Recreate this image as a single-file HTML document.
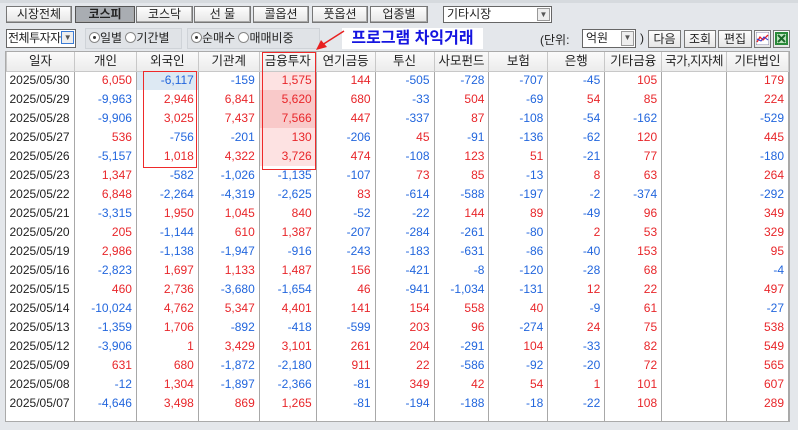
<!DOCTYPE html>
<html><head><meta charset="utf-8"><style>
*{box-sizing:border-box;margin:0;padding:0}
body{width:798px;height:430px;background:#e4e7eb;font-family:"Liberation Sans","Noto Sans CJK KR",sans-serif;font-size:12px;color:#222;position:relative;overflow:hidden}
.a{position:absolute}
.btn{position:absolute;top:6px;height:17px;border:1px solid #777;background:linear-gradient(#fdfdfd,#e6e6e6);text-align:center;line-height:15px;font-size:12px;box-shadow:inset -1px -1px 0 #aaa}
.btn.on{background:#a9adb2;font-weight:bold;border-color:#555}
.sb{position:absolute;height:18px;border:1px solid #777;background:linear-gradient(#fdfdfd,#e6e6e6);text-align:center;line-height:16px;top:30px}
.grp{position:absolute;top:28px;height:21px;border:1px solid #cfd3d8;background:#e0e3e7;line-height:19px;padding-left:3px}
.rad{display:inline-block;width:11px;height:11px;border:1px solid #888;border-radius:50%;background:#fff;vertical-align:-1px;position:relative}
.rad.on::after{content:"";position:absolute;left:3px;top:3px;width:3px;height:3px;border-radius:50%;background:#333}
.combo{position:absolute;border:1px solid #666;background:#fff;height:17px;line-height:15px;padding-left:3px}
.dd{position:absolute;right:1px;top:1px;width:13px;height:13px;border:1px solid #999;background:#eee;font-size:8px;text-align:center;line-height:12px;color:#555}
#tw{position:absolute;left:5px;top:51px;width:785px;height:371px;background:#fff;border:1px solid #aaa;overflow:hidden}
table{border-collapse:collapse;table-layout:fixed;position:absolute;left:0;top:0}
th{height:19px;line-height:17px;background:linear-gradient(#fafafa,#ececec);border:1px solid #c8c8c8;border-top:none;font-weight:normal;font-size:12.5px;color:#222;padding:0}
td{height:19px;line-height:17px;padding-top:0;padding-bottom:0;text-align:right;padding-right:4px;border-left:1px solid #a8a8a8;border-right:1px solid #a8a8a8;color:#e8262a;white-space:nowrap;font-size:12px;overflow:hidden}
td:first-child{color:#222;text-align:left;padding-left:3px;border-left:none}
td.n{color:#2266dd}
.pk{background:#fde2e2}
.pk2{background:#f9c9c9}
.sel{background:#dde9f3}
</style></head><body>
<div class="a" style="left:0;top:0;width:798px;height:3px;background:#d6dade"></div>
<div class="btn" style="left:6px;width:66px">시장전체</div>
<div class="btn on" style="left:75px;width:60px">코스피</div>
<div class="btn" style="left:136px;width:57px">코스닥</div>
<div class="btn" style="left:194px;width:57px">선 물</div>
<div class="btn" style="left:253px;width:56px">콜옵션</div>
<div class="btn" style="left:312px;width:56px">풋옵션</div>
<div class="btn" style="left:370px;width:58px">업종별</div>
<div class="combo" style="left:443px;top:6px;width:109px">기타시장<div class="dd">▼</div></div>

<div class="combo" style="left:6px;top:29px;width:70px;height:19px;line-height:17px;padding-left:1px;letter-spacing:-0.5px">전체투자자<div class="dd" style="border-color:#3a7bd5">▼</div></div>
<div class="grp" style="left:85px;width:97px"><span class="rad on"></span>일별 <span class="rad"></span>기간별</div>
<div class="grp" style="left:187px;width:133px"><span class="rad on"></span>순매수 <span class="rad"></span>매매비중</div>
<div class="a" style="left:342px;top:28px;width:141px;height:21px;background:#fff;color:#1515e0;font-weight:bold;font-size:16px;text-align:center;line-height:21px">프로그램 차익거래</div>
<svg class="a" style="left:312px;top:28px" width="34" height="26"><line x1="32" y1="3" x2="10" y2="17" stroke="#e82020" stroke-width="1.5"/><polygon points="4,22 9,12 15,19" fill="#e82020"/></svg>
<div class="a" style="left:540px;top:31px">(단위:</div>
<div class="combo" style="left:582px;top:29px;width:54px;height:19px;line-height:17px">억원<div class="dd" style="height:15px">▼</div></div>
<div class="a" style="left:640px;top:31px">)</div>
<div class="sb" style="left:648px;width:33px">다음</div>
<div class="sb" style="left:684px;width:32px">조회</div>
<div class="sb" style="left:718px;width:34px">편집</div>
<div class="sb" style="left:754px;width:17px;padding:1px"><svg width="13" height="13"><rect width="13" height="13" fill="#fff" stroke="#88a"/><polyline points="1,10 4,5 7,8 12,3" fill="none" stroke="#e22" stroke-width="1.3"/><polyline points="1,7 5,9 8,5 12,8" fill="none" stroke="#33c" stroke-width="1"/></svg></div>
<div class="sb" style="left:773px;width:17px;padding:1px"><svg width="13" height="13"><rect width="13" height="13" fill="#2a8a3a"/><rect x="2" y="2" width="9" height="9" fill="#bfe3c0"/><path d="M3 3L10 10M10 3L3 10" stroke="#1a6a2a" stroke-width="2"/></svg></div>

<div id="tw">
<table>
<colgroup><col style="width:68px"><col style="width:62px"><col style="width:62px"><col style="width:61px"><col style="width:57px"><col style="width:59px"><col style="width:59px"><col style="width:55px"><col style="width:59px"><col style="width:57px"><col style="width:57px"><col style="width:65px"><col style="width:62px"></colgroup>
<tr><th>일자</th><th>개인</th><th>외국인</th><th>기관계</th><th>금융투자</th><th>연기금등</th><th>투신</th><th>사모펀드</th><th>보험</th><th>은행</th><th>기타금융</th><th style="letter-spacing:-0.5px">국가,지자체</th><th>기타법인</th></tr>
<tr><td>2025/05/30</td><td>6,050</td><td class="n sel">-6,117</td><td class="n">-159</td><td class="pk">1,575</td><td>144</td><td class="n">-505</td><td class="n">-728</td><td class="n">-707</td><td class="n">-45</td><td>105</td><td></td><td>179</td></tr>
<tr><td>2025/05/29</td><td class="n">-9,963</td><td>2,946</td><td>6,841</td><td class="pk2">5,620</td><td>680</td><td class="n">-33</td><td>504</td><td class="n">-69</td><td>54</td><td>85</td><td></td><td>224</td></tr>
<tr><td>2025/05/28</td><td class="n">-9,906</td><td>3,025</td><td>7,437</td><td class="pk2">7,566</td><td>447</td><td class="n">-337</td><td>87</td><td class="n">-108</td><td class="n">-54</td><td class="n">-162</td><td></td><td class="n">-529</td></tr>
<tr><td>2025/05/27</td><td>536</td><td class="n">-756</td><td class="n">-201</td><td class="pk">130</td><td class="n">-206</td><td>45</td><td class="n">-91</td><td class="n">-136</td><td class="n">-62</td><td>120</td><td></td><td>445</td></tr>
<tr><td>2025/05/26</td><td class="n">-5,157</td><td>1,018</td><td>4,322</td><td class="pk">3,726</td><td>474</td><td class="n">-108</td><td>123</td><td>51</td><td class="n">-21</td><td>77</td><td></td><td class="n">-180</td></tr>
<tr><td>2025/05/23</td><td>1,347</td><td class="n">-582</td><td class="n">-1,026</td><td class="n">-1,135</td><td class="n">-107</td><td>73</td><td>85</td><td class="n">-13</td><td>8</td><td>63</td><td></td><td>264</td></tr>
<tr><td>2025/05/22</td><td>6,848</td><td class="n">-2,264</td><td class="n">-4,319</td><td class="n">-2,625</td><td>83</td><td class="n">-614</td><td class="n">-588</td><td class="n">-197</td><td class="n">-2</td><td class="n">-374</td><td></td><td class="n">-292</td></tr>
<tr><td>2025/05/21</td><td class="n">-3,315</td><td>1,950</td><td>1,045</td><td>840</td><td class="n">-52</td><td class="n">-22</td><td>144</td><td>89</td><td class="n">-49</td><td>96</td><td></td><td>349</td></tr>
<tr><td>2025/05/20</td><td>205</td><td class="n">-1,144</td><td>610</td><td>1,387</td><td class="n">-207</td><td class="n">-284</td><td class="n">-261</td><td class="n">-80</td><td>2</td><td>53</td><td></td><td>329</td></tr>
<tr><td>2025/05/19</td><td>2,986</td><td class="n">-1,138</td><td class="n">-1,947</td><td class="n">-916</td><td class="n">-243</td><td class="n">-183</td><td class="n">-631</td><td class="n">-86</td><td class="n">-40</td><td>153</td><td></td><td>95</td></tr>
<tr><td>2025/05/16</td><td class="n">-2,823</td><td>1,697</td><td>1,133</td><td>1,487</td><td>156</td><td class="n">-421</td><td class="n">-8</td><td class="n">-120</td><td class="n">-28</td><td>68</td><td></td><td class="n">-4</td></tr>
<tr><td>2025/05/15</td><td>460</td><td>2,736</td><td class="n">-3,680</td><td class="n">-1,654</td><td>46</td><td class="n">-941</td><td class="n">-1,034</td><td class="n">-131</td><td>12</td><td>22</td><td></td><td>497</td></tr>
<tr><td>2025/05/14</td><td class="n">-10,024</td><td>4,762</td><td>5,347</td><td>4,401</td><td>141</td><td>154</td><td>558</td><td>40</td><td class="n">-9</td><td>61</td><td></td><td class="n">-27</td></tr>
<tr><td>2025/05/13</td><td class="n">-1,359</td><td>1,706</td><td class="n">-892</td><td class="n">-418</td><td class="n">-599</td><td>203</td><td>96</td><td class="n">-274</td><td>24</td><td>75</td><td></td><td>538</td></tr>
<tr><td>2025/05/12</td><td class="n">-3,906</td><td>1</td><td>3,429</td><td>3,101</td><td>261</td><td>204</td><td class="n">-291</td><td>104</td><td class="n">-33</td><td>82</td><td></td><td>549</td></tr>
<tr><td>2025/05/09</td><td>631</td><td>680</td><td class="n">-1,872</td><td class="n">-2,180</td><td>911</td><td>22</td><td class="n">-586</td><td class="n">-92</td><td class="n">-20</td><td>72</td><td></td><td>565</td></tr>
<tr><td>2025/05/08</td><td class="n">-12</td><td>1,304</td><td class="n">-1,897</td><td class="n">-2,366</td><td class="n">-81</td><td>349</td><td>42</td><td>54</td><td>1</td><td>101</td><td></td><td>607</td></tr>
<tr><td>2025/05/07</td><td class="n">-4,646</td><td>3,498</td><td>869</td><td>1,265</td><td class="n">-81</td><td class="n">-194</td><td class="n">-188</td><td class="n">-18</td><td class="n">-22</td><td>108</td><td></td><td>289</td></tr>
<tr><td style="height:3px"></td><td style="height:3px"></td><td></td><td></td><td></td><td></td><td></td><td></td><td></td><td></td><td></td><td></td><td></td></tr>
</table>
</div>
<div class="a" style="left:143px;top:71px;width:54px;height:97px;border:1.5px solid #ee2a2a"></div>
<div class="a" style="left:262px;top:52px;width:54px;height:118px;border:1.5px solid #ee2a2a"></div>
</body></html>
